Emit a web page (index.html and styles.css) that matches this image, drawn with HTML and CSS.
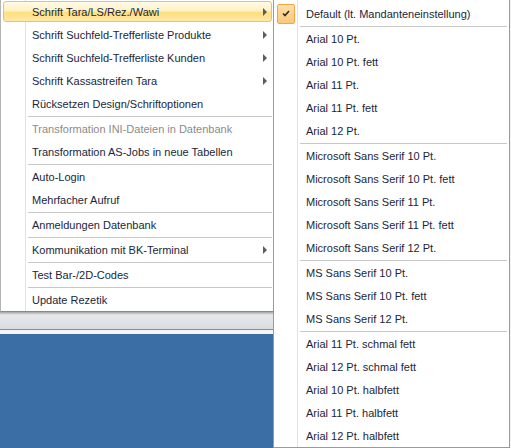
FILE: index.html
```html
<!DOCTYPE html>
<html lang="de">
<head>
    <meta charset="UTF-8">
    <title>Optionen Menü</title>
    <link rel="stylesheet" href="styles.css">
</head>
<body>
    <div class="screen">
        <div class="main-col">
            <ul class="menu main-menu">
                <li class="item has-sub active">Schrift Tara/LS/Rez./Wawi</li>
                <li class="item has-sub">Schrift Suchfeld-Trefferliste Produkte</li>
                <li class="item has-sub">Schrift Suchfeld-Trefferliste Kunden</li>
                <li class="item has-sub">Schrift Kassastreifen Tara</li>
                <li class="item">Rücksetzen Design/Schriftoptionen</li>
                <li class="sep"></li>
                <li class="item disabled">Transformation INI-Dateien in Datenbank</li>
                <li class="item">Transformation AS-Jobs in neue Tabellen</li>
                <li class="sep"></li>
                <li class="item">Auto-Login</li>
                <li class="item">Mehrfacher Aufruf</li>
                <li class="sep"></li>
                <li class="item">Anmeldungen Datenbank</li>
                <li class="sep"></li>
                <li class="item has-sub">Kommunikation mit BK-Terminal</li>
                <li class="sep"></li>
                <li class="item">Test Bar-/2D-Codes</li>
                <li class="sep"></li>
                <li class="item">Update Rezetik</li>
            </ul>
            <div class="statusbar"></div>
            <div class="desktop"></div>
        </div>

        <ul class="menu sub-menu">
            <li class="item"><span class="gutter checked"><svg width="8" height="7" viewBox="0 0 8 7"><path d="M1 3.5 L3 5.5 L7 1" fill="none" stroke="#2b2b2b" stroke-width="1.6"/></svg></span>Default (lt. Mandanteneinstellung)</li>
            <li class="sep"></li>
            <li class="item"><span class="gutter"></span>Arial 10 Pt.</li>
            <li class="item"><span class="gutter"></span>Arial 10 Pt. fett</li>
            <li class="item"><span class="gutter"></span>Arial 11 Pt.</li>
            <li class="item"><span class="gutter"></span>Arial 11 Pt. fett</li>
            <li class="item"><span class="gutter"></span>Arial 12 Pt.</li>
            <li class="sep"></li>
            <li class="item"><span class="gutter"></span>Microsoft Sans Serif 10 Pt.</li>
            <li class="item"><span class="gutter"></span>Microsoft Sans Serif 10 Pt. fett</li>
            <li class="item"><span class="gutter"></span>Microsoft Sans Serif 11 Pt.</li>
            <li class="item"><span class="gutter"></span>Microsoft Sans Serif 11 Pt. fett</li>
            <li class="item"><span class="gutter"></span>Microsoft Sans Serif 12 Pt.</li>
            <li class="sep"></li>
            <li class="item"><span class="gutter"></span>MS Sans Serif 10 Pt.</li>
            <li class="item"><span class="gutter"></span>MS Sans Serif 10 Pt. fett</li>
            <li class="item"><span class="gutter"></span>MS Sans Serif 12 Pt.</li>
            <li class="sep"></li>
            <li class="item"><span class="gutter"></span>Arial 11 Pt. schmal fett</li>
            <li class="item"><span class="gutter"></span>Arial 12 Pt. schmal fett</li>
            <li class="item"><span class="gutter"></span>Arial 10 Pt. halbfett</li>
            <li class="item"><span class="gutter"></span>Arial 11 Pt. halbfett</li>
            <li class="item"><span class="gutter"></span>Arial 12 Pt. halbfett</li>
        </ul>
    </div>
</body>
</html>
```

FILE: styles.css
```css
* {
    box-sizing: border-box;
}
html, body {
    margin: 0;
}
body {
    width: 511px;
    height: 448px;
    overflow: hidden;
    background: #f2f2f2;
    font-family: "Liberation Sans", Arial, sans-serif;
    font-size: 11px;
    color: #1c2639;
}
.screen {
    display: flex;
    height: 448px;
}
.main-col {
    width: 273px;
    display: flex;
    flex-direction: column;
}
.menu {
    list-style: none;
    margin: 0;
    background: #fff;
}
.main-menu {
    padding: 1px 1px 0 2px;
    border-left: 1px solid #b4b4b4;
    border-bottom: 1px solid #878787;
    background: linear-gradient(to right, #fff 24px, #e2e2e2 24px, #e2e2e2 25px, #fff 25px);
}
.item {
    height: 21px;
    margin: 0 0 2px;
    display: flex;
    align-items: center;
    white-space: nowrap;
    border: 1px solid transparent;
    border-radius: 3px;
}
.main-menu .item {
    padding: 0 4px 0 28px;
}
.main-menu .item:last-child {
    margin-bottom: 1px;
}
.has-sub::after {
    content: "";
    margin-left: auto;
    border-left: 4px solid #5c5c5c;
    border-top: 4px solid transparent;
    border-bottom: 4px solid transparent;
}
.active {
    border-color: #e9c266;
    background: linear-gradient(#fffbe8, #fff1c4 45%, #ffdf7e 55%, #ffe9a8);
}
.disabled {
    color: #8b8b8b;
}
.sep {
    height: 1px;
    margin: 0 0 1px 25px;
    background: #c8c8c8;
}
.statusbar {
    height: 22px;
    background: linear-gradient(#a4a4a4 0, #d2d3d6 2px, #e7e8eb 3px, #dbdce0 17px, #8c8c8c 17px, #8c8c8c 18px, #f5f5f5 18px);
}
.desktop {
    flex: 1;
    background: #3a6ea5;
}
.sub-menu {
    width: 237px;
    height: 448px;
    padding: 3px 2px 0 2px;
    border: 1px solid #9a9a9a;
    border-top: none;
    background: linear-gradient(to right, #fff 23px, #e2e2e2 23px, #e2e2e2 24px, #fff 24px);
}
.sub-menu .sep {
    margin-left: 24px;
}
.gutter {
    width: 18px;
    height: 20px;
    margin-right: 11px;
    flex: none;
    display: flex;
    align-items: center;
    justify-content: center;
}
.checked {
    border: 1px solid #f0a54a;
    border-radius: 2px;
    background: linear-gradient(#ffdfa8, #fcc878);
}
```
